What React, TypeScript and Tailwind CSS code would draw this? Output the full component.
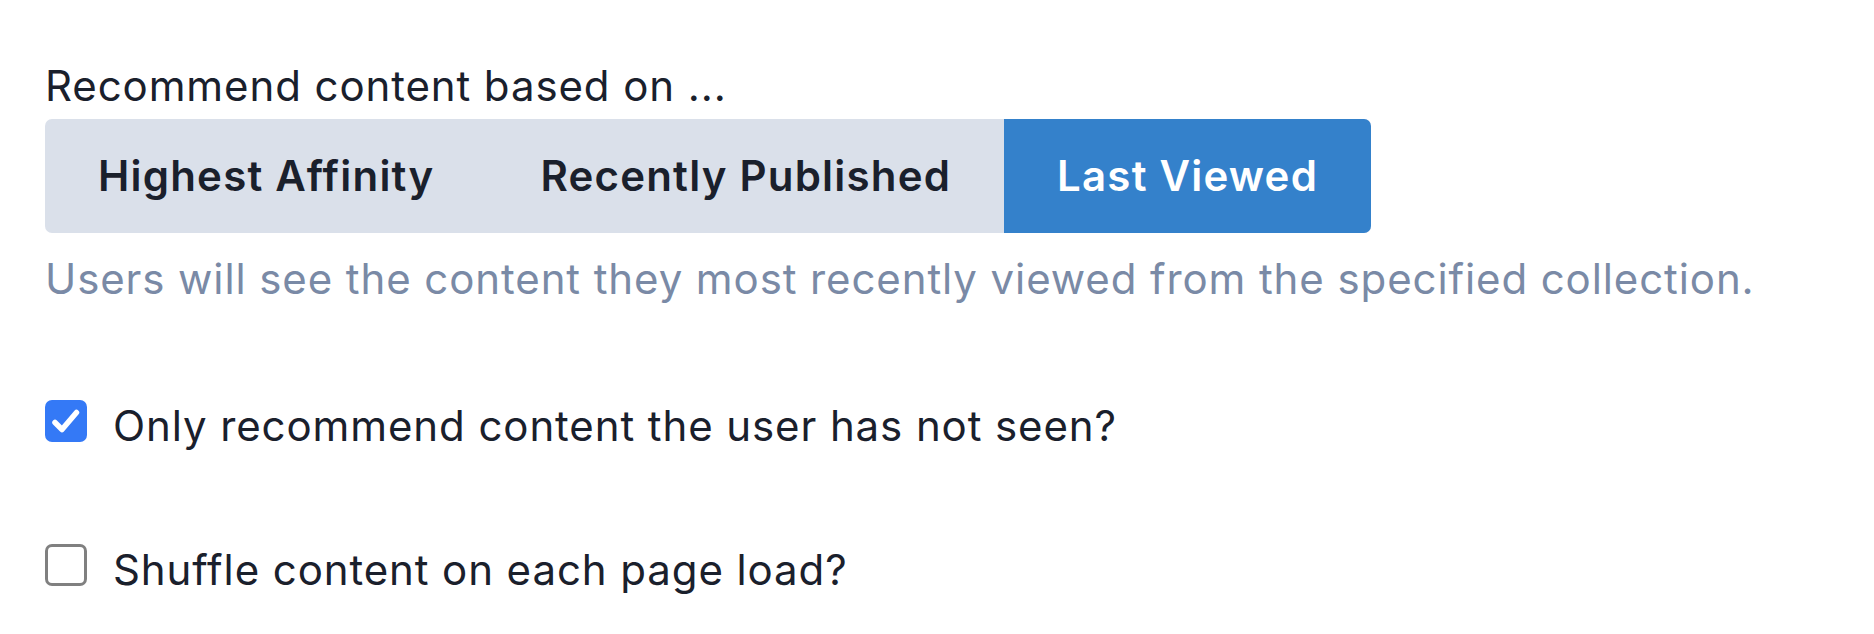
import React, { useState } from "react";

export default function App() {
  const [mode, setMode] = useState("last");
  const [unseen, setUnseen] = useState(true);
  const [shuffle, setShuffle] = useState(false);
  const opts = [
    { id: "affinity", label: "Highest Affinity" },
    { id: "recent", label: "Recently Published" },
    { id: "last", label: "Last Viewed" },
  ];
  return (
    <div
      className="w-[1874px] h-[634px] bg-white pl-[45px] pt-[60px] text-[#1a202c] text-[42px] leading-[52px] tracking-[0.9px]"
      style={{ fontFamily: "Inter, 'Noto Sans', sans-serif" }}
    >
      <div>Recommend content based on ...</div>
      <div className="mt-[7px] inline-flex h-[114px] rounded-[7px] bg-[#dae0ea] overflow-hidden">
        {opts.map((o) => (
          <button
            key={o.id}
            onClick={() => setMode(o.id)}
            className={
              o.id === mode
                ? "px-[53px] font-semibold tracking-[1.2px] bg-[#3481cb] text-white"
                : "px-[53px] font-semibold tracking-[1.2px] text-[#1a202c]"
            }
          >
            {o.label}
          </button>
        ))}
      </div>
      <div className="mt-[20px] text-[#7a8aa6]">
        Users will see the content they most recently viewed from the specified collection.
      </div>
      <label className="mt-[95px] flex items-start gap-[26px] cursor-pointer">
        <span
          onClick={() => setUnseen(!unseen)}
          className="w-[42px] h-[42px] rounded-[7px] bg-[#3479f6] flex items-center justify-center shrink-0"
        >
          {unseen && (
            <svg width="42" height="42" viewBox="0 0 42 42" fill="none">
              <path d="M10 22.5l7 7L31.5 12.5" stroke="white" strokeWidth="5.5" strokeLinecap="round" strokeLinejoin="round" />
            </svg>
          )}
        </span>
        <span>Only recommend content the user has not seen?</span>
      </label>
      <label className="mt-[92px] flex items-start gap-[26px] cursor-pointer">
        <span
          onClick={() => setShuffle(!shuffle)}
          className="w-[42px] h-[42px] rounded-[7px] border-[3px] border-[#808080] bg-white flex items-center justify-center shrink-0"
        />
        <span>Shuffle content on each page load?</span>
      </label>
    </div>
  );
}
